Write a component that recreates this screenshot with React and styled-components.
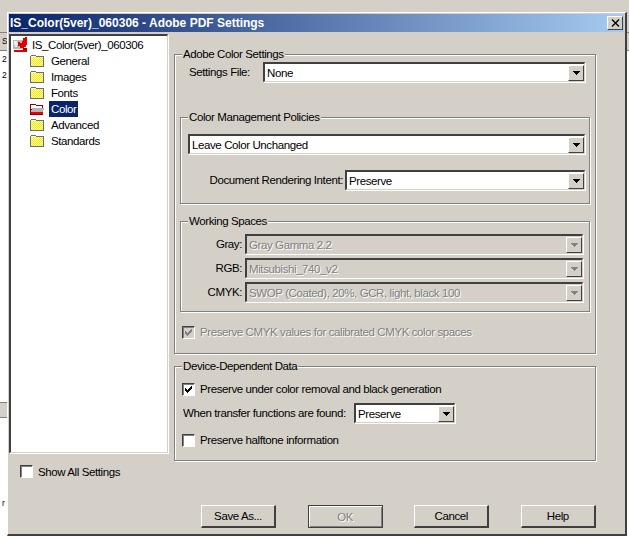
import styled, { createGlobalStyle } from 'styled-components'

const Global = createGlobalStyle`
  html, body { margin: 0; padding: 0; background: #fff; }
  * { box-sizing: border-box; }
`

const face = '#d4d0c8'

const Screen = styled.div`
  width: 629px;
  height: 540px;
  display: flex;
  overflow: hidden;
  background: #fff;
  font-family: "Liberation Sans", Arial, sans-serif;
  font-size: 11.5px;
  letter-spacing: -0.4px;
  color: #000;
`

const BackLeft = styled.div`
  width: 7px;
  overflow: hidden;
  display: flex;
  flex-direction: column;
  font-size: 8.5px;
`

const BackTop = styled.div`
  height: 32px;
  flex-shrink: 0;
  background: ${face};
`

const BackTab = styled.div`
  height: ${p => p.$h}px;
  flex-shrink: 0;
  padding-left: 2px;
  background: ${face};
  border-top: 1px solid #808080;
  border-bottom: 1px solid #808080;
  line-height: 17px;
  margin-top: ${p => p.$mt || 0}px;
`

const BackLine = styled.div`
  height: 16px;
  flex-shrink: 0;
  padding-left: 2px;
  line-height: 16px;
  margin-top: ${p => p.$mt || 0}px;
`

const BackRight = styled.div`
  width: 2px;
  display: flex;
  flex-direction: column;
`

const Center = styled.div`
  width: 620px;
  display: flex;
  flex-direction: column;
`

const TopBand = styled.div`
  height: 12px;
  background: ${face};
`

const Window = styled.div`
  width: 620px;
  height: 524px;
  padding: 1px;
  display: flex;
  flex-direction: column;
  background: ${face};
  border-top: 1px solid #fff;
  border-left: 1px solid #fff;
  border-right: 2px solid #404040;
  border-bottom: 2px solid #404040;
`

const TitleBar = styled.div`
  height: 18px;
  flex-shrink: 0;
  padding: 0 1px 0 1px;
  display: flex;
  align-items: center;
  justify-content: space-between;
  background: linear-gradient(90deg, #0a246a 0%, #a6caf0 100%);
  color: #fff;
  font-weight: bold;
  font-size: 12px;
  letter-spacing: 0;
`

const CloseBox = styled.div`
  width: 16px;
  height: 14px;
  display: flex;
  align-items: center;
  justify-content: center;
  background: ${face};
  border-top: 1px solid #fff;
  border-left: 1px solid #fff;
  border-right: 1px solid #404040;
  border-bottom: 1px solid #404040;
`

const Main = styled.div`
  display: flex;
  margin-top: 2px;
`

const LeftCol = styled.div`
  width: 159px;
  margin-right: 6px;
`

const Tree = styled.div`
  height: 419px;
  padding: 1px 0 0 2px;
  background: #fff;
  border-top: 2px solid #404040;
  border-left: 2px solid #404040;
  border-right: 1px solid ${face};
  border-bottom: 1px solid ${face};
  box-shadow: 1px 1px 0 #fff;
`

const TreeRow = styled.div`
  height: 16px;
  display: flex;
  align-items: center;
  padding-left: ${p => (p.$root ? 0 : 16)}px;
`

const TreeLabel = styled.span`
  margin-left: ${p => (p.$root ? 2 : 4)}px;
  padding: 0 2px;
  line-height: 16px;
  background: ${p => (p.$selected ? '#0a246a' : 'transparent')};
  color: ${p => (p.$selected ? '#fff' : '#000')};
`

const ShowAll = styled.div`
  margin: 12px 0 0 11px;
  display: flex;
  align-items: center;
  gap: 5px;
`

const RightCol = styled.div`
  width: 423px;
  padding-top: 14px;
`

const Group = styled.fieldset`
  margin: 0;
  min-width: 0;
  padding: 0;
  height: ${p => p.$h}px;
  border: 1px solid #808080;
  box-shadow: 1px 1px 0 #fff, inset 1px 1px 0 #fff;
  margin-top: ${p => p.$mt || 0}px;
  margin-left: ${p => p.$ml || 0}px;
  width: ${p => p.$w}px;
`

const Legend = styled.legend`
  margin-left: 7px;
  padding: 0 1px;
  background: ${face};
  line-height: 13px;
`

const Row = styled.div`
  display: flex;
  align-items: center;
  height: ${p => p.$h || 20}px;
  margin-top: ${p => p.$mt || 0}px;
  padding-left: ${p => p.$pl || 0}px;
  color: ${p => (p.$off ? '#808080' : '#000')};
  text-shadow: ${p => (p.$off ? '1px 1px 0 #fff' : 'none')};
`

const FieldLabel = styled.label`
  width: ${p => (p.$w ? `${p.$w}px` : 'auto')};
  text-align: ${p => (p.$left ? 'left' : 'right')};
  padding-right: ${p => p.$pr ?? 0}px;
  flex-shrink: 0;
  white-space: nowrap;
  color: #000;
  text-shadow: none;
`

const Select = styled.div`
  width: ${p => p.$w}px;
  height: ${p => p.$h || 20}px;
  display: flex;
  align-items: center;
  justify-content: space-between;
  background: ${p => (p.$off ? face : '#fff')};
  color: ${p => (p.$off ? '#808080' : '#000')};
  text-shadow: ${p => (p.$off ? '1px 1px 0 #fff' : 'none')};
  border-top: 2px solid #404040;
  border-left: 2px solid #404040;
  border-right: 1px solid ${face};
  border-bottom: 1px solid ${face};
  box-shadow: 1px 1px 0 #fff;
  padding-left: 2px;
`

const SpaceList = styled.div`
  padding-top: 4px;
`

const ArrowBtn = styled.div`
  width: 16px;
  height: 16px;
  display: flex;
  align-items: center;
  justify-content: center;
  background: ${face};
  border-top: 1px solid #fff;
  border-left: 1px solid #fff;
  border-right: 1px solid #404040;
  border-bottom: 1px solid #404040;
`

const Box = styled.div`
  width: 13px;
  height: 13px;
  flex-shrink: 0;
  display: flex;
  align-items: center;
  justify-content: center;
  background: ${p => (p.$off ? face : '#fff')};
  border-top: 1px solid #404040;
  border-left: 1px solid #404040;
  border-right: 1px solid #fff;
  border-bottom: 1px solid #fff;
  box-shadow: inset 1px 1px 0 #808080;
`

const CheckRow = styled(Row)`
  gap: 5px;
`

const Footer = styled.div`
  margin-top: 27px;
  padding-left: 192px;
  display: flex;
  gap: 31.6px;
`

const Button = styled.button`
  width: 75px;
  height: 23px;
  padding: 0;
  background: ${face};
  font: inherit;
  letter-spacing: inherit;
  color: #000;
  border-top: 1px solid #fff;
  border-left: 1px solid #fff;
  border-right: 2px solid #404040;
  border-bottom: 2px solid #404040;
  ${p => p.disabled && `
    color: #808080;
    text-shadow: 1px 1px 0 #fff;
    border: 1px solid #404040;
    box-shadow: inset 1px 1px 0 #fff, inset -1px -1px 0 #808080;
  `}
`

const Arrow = ({ off }) => (
  <svg width="7" height="4" viewBox="0 0 7 4" shapeRendering="crispEdges">
    <path d="M0 0h7v1H6v1H5v1H4v1H3V3H2V2H1V1H0z" fill={off ? '#808080' : '#000'} />
  </svg>
)

const Tick = ({ off }) => (
  <svg width="9" height="9" viewBox="0 0 9 9" shapeRendering="crispEdges">
    <path d="M7 1h1v3H7v1H6v1H5v1H4v1H3V7H2V6H1V3h1v1h1v1h1V4h1V3h1V2h1z" fill={off ? '#808080' : '#000'} />
  </svg>
)

const Folder = ({ open }) => (
  <svg width="16" height="14" viewBox="0 0 16 14" shapeRendering="crispEdges">
    <defs>
      <pattern id="dither" width="2" height="2" patternUnits="userSpaceOnUse">
        <rect width="2" height="2" fill="#f4f000" />
        <rect width="1" height="1" fill="#f8f8c0" />
        <rect x="1" y="1" width="1" height="1" fill="#f8f8c0" />
      </pattern>
    </defs>
    {open ? (
      <>
        <path d="M1 2h5l1 1h7v10H1z" fill="#8c0000" />
        <path d="M2 3h4l1 1h6v3H2z" fill="#ffffff" />
        <path d="M3 6h12v1l-2 4H2v-1z" fill="#b4b4b4" />
        <path d="M2 10h12v2H2z" fill="#f00000" />
      </>
    ) : (
      <>
        <path d="M2 1h5v1h8v11H1V2h1z" fill="#6e6e6e" />
        <path d="M2 3h12v9H2z" fill="url(#dither)" />
        <path d="M2 2h5v1H2z" fill="#ffffd0" />
      </>
    )}
  </svg>
)

const RootIcon = () => (
  <svg width="15" height="16" viewBox="0 0 15 16" shapeRendering="crispEdges">
    <path d="M0 3h10v9H0z" fill="#b8b8b8" />
    <path d="M1 4h3v2h2v2H4v2H2V8H1z" fill="#eeeeee" />
    <path d="M5 5h2v1h2V4h1V1h2V0h2v8h-1v2h-2v1H7V9H5z" fill="#e00000" />
    <path d="M1 13h13v2H1z" fill="#e00000" />
    <path d="M10 11h4v2h-4z" fill="#a00000" />
  </svg>
)

const folders = ['General', 'Images', 'Fonts', 'Color', 'Advanced', 'Standards']

const spaces = [
  { label: 'Gray:', value: 'Gray Gamma 2.2' },
  { label: 'RGB:', value: 'Mitsubishi_740_v2' },
  { label: 'CMYK:', value: 'SWOP (Coated), 20%, GCR, light, black 100' },
]

export default function App() {
  return (
    <Screen>
      <Global />
      <BackLeft>
        <BackTop />
        <BackTab $h={19}>S</BackTab>
        <BackLine>2</BackLine>
        <BackLine>2</BackLine>
        <BackTab $h={16} $mt={319} />
        <BackLine $mt={77}>r</BackLine>
      </BackLeft>
      <Center>
        <TopBand />
        <Window>
          <TitleBar>
            <span>IS_Color(5ver)_060306 - Adobe PDF Settings</span>
            <CloseBox>
              <svg width="9" height="8" viewBox="0 0 9 8">
                <path d="M1 0.5L8 7.5M8 0.5L1 7.5" stroke="#000" strokeWidth="1.4" />
              </svg>
            </CloseBox>
          </TitleBar>
          <Main>
            <LeftCol>
              <Tree>
                <TreeRow $root>
                  <RootIcon />
                  <TreeLabel $root>IS_Color(5ver)_060306</TreeLabel>
                </TreeRow>
                {folders.map(f => (
                  <TreeRow key={f}>
                    <Folder open={f === 'Color'} />
                    <TreeLabel $selected={f === 'Color'}>{f}</TreeLabel>
                  </TreeRow>
                ))}
              </Tree>
              <ShowAll>
                <Box />
                Show All Settings
              </ShowAll>
            </LeftCol>
            <RightCol>
              <Group $w={422} $h={306}>
                <Legend>Adobe Color Settings</Legend>
                <Row $mt={1} $pl={14}>
                  <FieldLabel $w={74} $left>Settings File:</FieldLabel>
                  <Select $w={322}>
                    None
                    <ArrowBtn><Arrow /></ArrowBtn>
                  </Select>
                </Row>
                <Group $w={410} $h={93} $mt={29} $ml={5}>
                  <Legend>Color Management Policies</Legend>
                  <Row $mt={10} $pl={7}>
                    <Select $w={397}>
                      Leave Color Unchanged
                      <ArrowBtn><Arrow /></ArrowBtn>
                    </Select>
                  </Row>
                  <Row $mt={16} $pl={24}>
                    <FieldLabel $w={140} $pr={2}>Document Rendering Intent:</FieldLabel>
                    <Select $w={240}>
                      Preserve
                      <ArrowBtn><Arrow /></ArrowBtn>
                    </Select>
                  </Row>
                </Group>
                <Group $w={410} $h={97} $mt={11} $ml={5}>
                  <Legend>Working Spaces</Legend>
                  <SpaceList>
                    {spaces.map(s => (
                      <Row key={s.label} $h={24} $off>
                        <FieldLabel $w={64} $pr={3}>{s.label}</FieldLabel>
                        <Select $w={338} $off>
                          {s.value}
                          <ArrowBtn><Arrow off /></ArrowBtn>
                        </Select>
                      </Row>
                    ))}
                  </SpaceList>
                </Group>
                <CheckRow $off $mt={13} $pl={7} $h={14}>
                  <Box $off><Tick off /></Box>
                  Preserve CMYK values for calibrated CMYK color spaces
                </CheckRow>
              </Group>
              <Group $w={422} $h={101} $mt={6}>
                <Legend>Device-Dependent Data</Legend>
                <CheckRow $mt={9} $pl={7} $h={14}>
                  <Box><Tick /></Box>
                  Preserve under color removal and black generation
                </CheckRow>
                <Row $mt={7} $pl={8}>
                  <FieldLabel $w={171} $left>When transfer functions are found:</FieldLabel>
                  <Select $w={101}>
                    Preserve
                    <ArrowBtn><Arrow /></ArrowBtn>
                  </Select>
                </Row>
                <CheckRow $mt={10} $pl={7} $h={14}>
                  <Box />
                  Preserve halftone information
                </CheckRow>
              </Group>
            </RightCol>
          </Main>
          <Footer>
            <Button>Save As...</Button>
            <Button disabled>OK</Button>
            <Button>Cancel</Button>
            <Button>Help</Button>
          </Footer>
        </Window>
      </Center>
      <BackRight>
        <BackTop />
        <BackTab $h={19} />
      </BackRight>
    </Screen>
  )
}
